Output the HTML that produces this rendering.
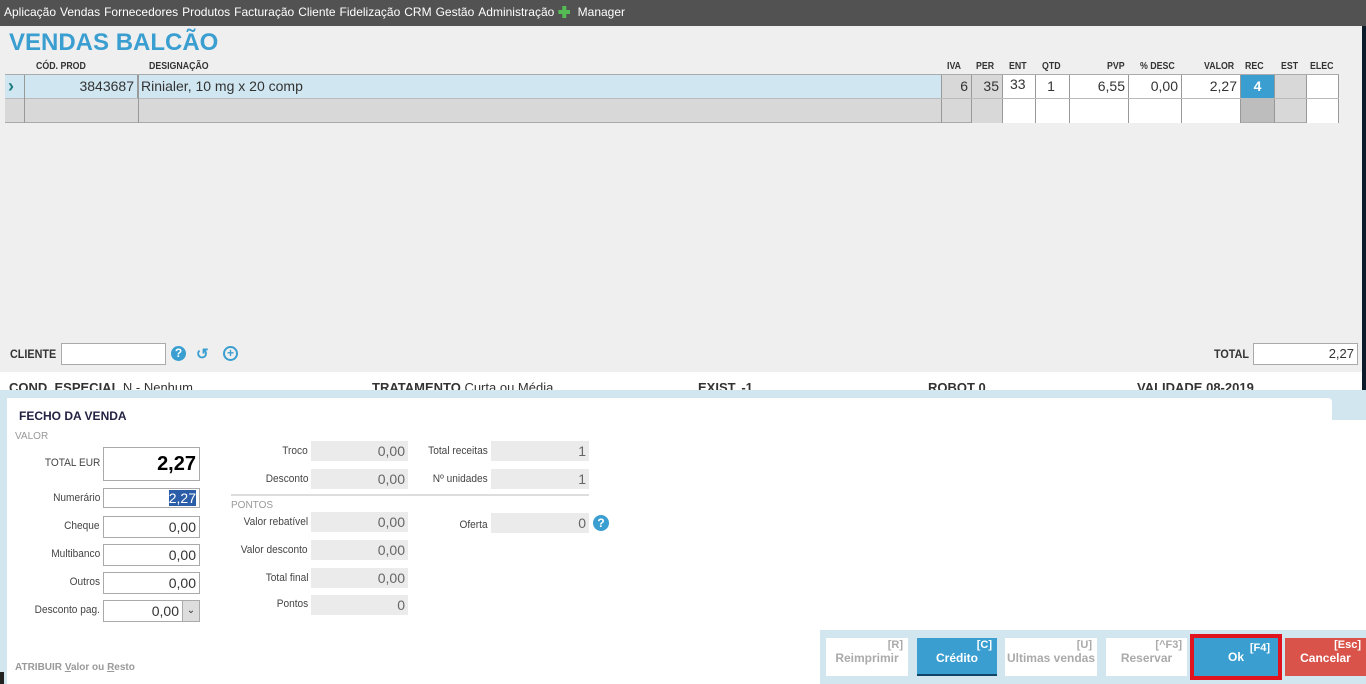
<!DOCTYPE html>
<html><head><meta charset="utf-8"><style>
*{margin:0;padding:0;box-sizing:border-box}
body{width:1366px;height:684px;overflow:hidden;background:#efefef;font-family:"Liberation Sans",sans-serif;position:relative;color:#333}
.a{position:absolute}
.menu{left:0;top:0;width:1366px;height:26px;background:#525252;color:#fff;font-size:12px;line-height:25px;padding-left:4px;white-space:nowrap}
.menu span{margin-right:4px}
.h{font-size:10px;font-weight:bold;color:#333;top:61px;transform:scaleX(.88);transform-origin:left}
.c{border-right:1px solid #999;height:24px;font-size:14px;line-height:24px;text-align:right;padding-right:3px}
.lbl{font-size:11px;color:#444;text-align:right;transform:scaleX(.92);transform-origin:right}
.box{background:#fff;border:1px solid #aaa;font-size:14px;text-align:right;padding-right:3px;height:22px;line-height:20px}
.g{background:#ebebeb;font-size:14px;text-align:right;padding-right:3px;height:20px;line-height:20px;color:#666}
.btn{top:638px;height:38px;font-size:12px;font-weight:bold;text-align:center;line-height:40px}
.btn i{position:absolute;right:5px;top:-13px;font-style:normal;font-size:11px}
</style></head><body>
<div class="a menu"><span>Aplicação</span><span>Vendas</span><span>Fornecedores</span><span>Produtos</span><span>Facturação</span><span>Cliente</span><span>Fidelização</span><span>CRM</span><span>Gestão</span><span>Administração</span><span style="display:inline-block;width:12px;height:12px;background:#5b5;vertical-align:-2px;clip-path:polygon(33% 0,67% 0,67% 33%,100% 33%,100% 67%,67% 67%,67% 100%,33% 100%,33% 67%,0 67%,0 33%,33% 33%)"></span> Manager</div>
<div class="a" style="right:0;top:26px;width:4px;height:365px;background:#0d1a2a"></div>
<div class="a" style="left:9px;top:29px;font-size:24px;font-weight:bold;color:#3a9fd0">VENDAS BALCÃO</div>
<div class="a h" style="left:36px">CÓD. PROD</div>
<div class="a h" style="left:149px">DESIGNAÇÃO</div>
<div class="a h" style="left:947px">IVA</div>
<div class="a h" style="left:976px">PER</div>
<div class="a h" style="left:1009px">ENT</div>
<div class="a h" style="left:1042px">QTD</div>
<div class="a h" style="left:1107px">PVP</div>
<div class="a h" style="left:1140px">% DESC</div>
<div class="a h" style="left:1204px">VALOR</div>
<div class="a h" style="left:1245px">REC</div>
<div class="a h" style="left:1281px">EST</div>
<div class="a h" style="left:1310px">ELEC</div>
<div class="a" style="left:5px;top:74px;width:1334px;height:49px;border-top:1px solid #aaa;border-bottom:1px solid #aaa;background:#d8d8d8"></div>
<div class="a" style="left:5px;top:75px;width:937px;height:23px;background:#d0e6f1"></div>
<div class="a" style="left:5px;top:98px;width:1334px;border-top:1px solid #bbb"></div>
<div class="a" style="left:8px;top:75px;color:#1a7c7c;font-weight:bold;font-size:18px;line-height:22px">›</div>
<div class="a" style="left:24px;top:75px;height:48px;border-left:1px solid #999"></div>
<div class="a c" style="left:24px;top:75px;width:114px;height:23px;line-height:22px">3843687</div>
<div class="a" style="left:138px;top:75px;height:48px;border-left:1px solid #999"></div>
<div class="a" style="left:141px;top:75px;font-size:14px;line-height:22px">Rinialer, 10 mg x 20 comp</div>
<div class="a" style="left:941px;top:75px;height:48px;border-left:1px solid #999"></div>
<div class="a c" style="left:941px;top:75px;width:31px;height:48px;line-height:22px">6</div>
<div class="a c" style="left:972px;top:75px;width:31px;height:48px;line-height:22px;background:#d8d8d8">35</div>
<div class="a" style="left:1003px;top:75px;width:238px;height:48px;background:#fff"></div>
<div class="a c" style="left:1003px;top:75px;width:33px;height:48px;text-align:left;padding-left:7px;line-height:18px">33</div>
<div class="a c" style="left:1036px;top:75px;width:34px;height:48px;text-align:center;line-height:22px">1</div>
<div class="a c" style="left:1070px;top:75px;width:59px;height:48px;line-height:22px">6,55</div>
<div class="a c" style="left:1129px;top:75px;width:53px;height:48px;line-height:22px">0,00</div>
<div class="a c" style="left:1182px;top:75px;width:59px;height:48px;line-height:22px">2,27</div>
<div class="a" style="left:1241px;top:75px;width:33px;height:23px;background:#3a9fd0;color:#fff;font-weight:bold;font-size:14px;text-align:center;line-height:22px">4</div>
<div class="a" style="left:1241px;top:99px;width:33px;height:23px;background:#bdbdbd"></div>
<div class="a c" style="left:1274px;top:75px;width:33px;height:48px;border-left:1px solid #999"></div>
<div class="a" style="left:1307px;top:75px;width:32px;height:48px;background:#fff;border-right:1px solid #999"></div>
<div class="a" style="left:941px;top:98px;width:398px;border-top:1px solid #bbb"></div>
<div class="a" style="left:10px;top:347px;font-size:12px;font-weight:bold;transform:scaleX(.9);transform-origin:left">CLIENTE</div>
<div class="a" style="left:61px;top:343px;width:105px;height:22px;background:#fff;border:1px solid #aaa"></div>
<div class="a" style="left:171px;top:346px;width:15px;height:15px;border-radius:50%;background:#3a9fd0;color:#fff;font-size:12px;font-weight:bold;text-align:center;line-height:15px">?</div>
<div class="a" style="left:196px;top:345px;color:#3a9fd0;font-size:15px;font-weight:bold">↺</div>
<div class="a" style="left:223px;top:346px;width:15px;height:15px;border-radius:50%;border:2px solid #3a9fd0;color:#3a9fd0;font-size:12px;font-weight:bold;text-align:center;line-height:11px">+</div>
<div class="a" style="left:1214px;top:347px;font-size:12px;font-weight:bold;transform:scaleX(.9);transform-origin:left">TOTAL</div>
<div class="a box" style="left:1253px;top:343px;width:105px;font-size:13px">2,27</div>
<div class="a" style="left:0;top:372px;width:1362px;height:20px;background:#fff"></div>
<div class="a" style="left:9px;top:380px;font-size:13px;font-weight:bold;white-space:nowrap">COND. ESPECIAL <span style="font-weight:normal">N - Nenhum</span></div>
<div class="a" style="left:372px;top:380px;font-size:13px;font-weight:bold;white-space:nowrap">TRATAMENTO <span style="font-weight:normal">Curta ou Média</span></div>
<div class="a" style="left:698px;top:380px;font-size:13px;font-weight:bold">EXIST. -1</div>
<div class="a" style="left:928px;top:380px;font-size:13px;font-weight:bold">ROBOT 0</div>
<div class="a" style="left:1137px;top:380px;font-size:13px;font-weight:bold">VALIDADE 08-2019</div>
<div class="a" style="left:0;top:390px;width:1366px;height:294px;background:#d2e6f0"></div>
<div class="a" style="left:7px;top:398px;width:1325px;height:286px;background:#fff;border-radius:0 4px 0 0"></div>
<div class="a" style="left:7px;top:420px;width:1359px;height:210px;background:#fff"></div>
<div class="a" style="left:7px;top:420px;width:813px;height:264px;background:#fff"></div>
<div class="a" style="left:0;top:672px;width:4px;height:12px;background:#222"></div>
<div class="a" style="left:19px;top:409px;font-size:12px;font-weight:bold;color:#224">FECHO DA VENDA</div>
<div class="a" style="left:15px;top:431px;font-size:10px;color:#999">VALOR</div>
<div class="a lbl" style="right:1266px;top:457px">TOTAL EUR</div>
<div class="a box" style="left:103px;top:447px;width:97px;height:34px;line-height:32px;font-size:20px;font-weight:bold;color:#000">2,27</div>
<div class="a lbl" style="right:1266px;top:492px">Numerário</div>
<div class="a box" style="left:103px;top:488px;width:97px;height:20px;line-height:18px"><span style="background:#2a5ca8;color:#fff">2,27</span></div>
<div class="a lbl" style="right:1266px;top:520px">Cheque</div>
<div class="a box" style="left:103px;top:516px;width:97px">0,00</div>
<div class="a lbl" style="right:1266px;top:548px">Multibanco</div>
<div class="a box" style="left:103px;top:544px;width:97px">0,00</div>
<div class="a lbl" style="right:1266px;top:576px">Outros</div>
<div class="a box" style="left:103px;top:572px;width:97px">0,00</div>
<div class="a lbl" style="right:1266px;top:604px">Desconto pag.</div>
<div class="a box" style="left:103px;top:600px;width:97px;padding-right:20px">0,00</div>
<div class="a" style="left:182px;top:601px;width:17px;height:20px;background:#ddd;border-left:1px solid #aaa;font-size:10px;text-align:center;line-height:20px">⌄</div>
<div class="a lbl" style="right:1058px;top:445px">Troco</div>
<div class="a g" style="left:311px;top:441px;width:97px">0,00</div>
<div class="a lbl" style="right:1058px;top:473px">Desconto</div>
<div class="a g" style="left:311px;top:469px;width:97px">0,00</div>
<div class="a lbl" style="right:878px;top:445px">Total receitas</div>
<div class="a g" style="left:491px;top:441px;width:98px">1</div>
<div class="a lbl" style="right:878px;top:473px">Nº unidades</div>
<div class="a g" style="left:491px;top:469px;width:98px">1</div>
<div class="a" style="left:231px;top:494px;width:358px;border-top:2px solid #ddd"></div>
<div class="a" style="left:231px;top:500px;font-size:10px;color:#999">PONTOS</div>
<div class="a lbl" style="right:1058px;top:516px">Valor rebatível</div>
<div class="a g" style="left:311px;top:512px;width:97px">0,00</div>
<div class="a lbl" style="right:1058px;top:544px">Valor desconto</div>
<div class="a g" style="left:311px;top:540px;width:97px">0,00</div>
<div class="a lbl" style="right:1058px;top:572px">Total final</div>
<div class="a g" style="left:311px;top:568px;width:97px">0,00</div>
<div class="a lbl" style="right:1058px;top:598px">Pontos</div>
<div class="a g" style="left:311px;top:595px;width:97px">0</div>
<div class="a lbl" style="right:878px;top:519px">Oferta</div>
<div class="a g" style="left:491px;top:513px;width:98px">0</div>
<div class="a" style="left:593px;top:515px;width:16px;height:16px;border-radius:50%;background:#3a9fd0;color:#fff;font-size:12px;font-weight:bold;text-align:center;line-height:16px">?</div>
<div class="a" style="left:15px;top:662px;font-size:10px;color:#999;font-weight:bold">ATRIBUIR <u>V</u>alor ou <u>R</u>esto</div>
<div class="a" style="left:820px;top:630px;width:546px;height:54px;background:#d2e6f0"></div>
<div class="a btn" style="left:826px;width:82px;background:#fff;color:#aaa"><i>[R]</i>Reimprimir</div>
<div class="a btn" style="left:917px;width:80px;background:#3a9fd0;color:#fff;border-bottom:2px solid #146"><i>[C]</i>Crédito</div>
<div class="a btn" style="left:1005px;width:92px;background:#fff;color:#aaa"><i>[U]</i>Ultimas vendas</div>
<div class="a btn" style="left:1106px;width:81px;background:#fff;color:#aaa"><i>[^F3]</i>Reservar</div>
<div class="a btn" style="left:1190px;top:634px;width:92px;height:46px;border:4px solid #e0141e;background:#3a9fd0;color:#fff;line-height:38px"><i style="top:-9px;right:8px">[F4]</i>Ok</div>
<div class="a btn" style="left:1285px;width:81px;background:#d9534a;color:#fff"><i>[Esc]</i>Cancelar</div>
</body></html>
